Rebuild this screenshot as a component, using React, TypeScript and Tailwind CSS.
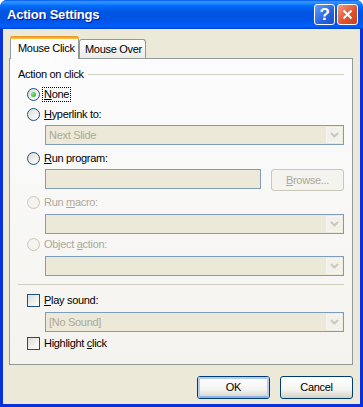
import type { ReactNode } from "react";

const font = "font-['Liberation_Sans',Arial,sans-serif]";

function Key({ children }: { children: ReactNode }) {
  return <span className="underline underline-offset-[1px]">{children}</span>;
}

function Radio({ checked, disabled }: { checked?: boolean; disabled?: boolean }) {
  return (
    <div
      className={`w-[13px] h-[13px] rounded-full border flex items-center justify-center shrink-0 ${
        disabled
          ? "border-[#CAC8BB] bg-[#F4F3EE]"
          : "border-[#1C5180] bg-[linear-gradient(135deg,#DCDCD7,#FFFFFF)]"
      }`}
    >
      {checked && (
        <div className="w-[5px] h-[5px] rounded-full bg-[radial-gradient(circle_at_35%_35%,#8CE88A,#21A121)]" />
      )}
    </div>
  );
}

function Checkbox() {
  return (
    <div className="w-[13px] h-[13px] border border-[#1C5180] bg-[linear-gradient(135deg,#DCDCD7,#FFFFFF)] shrink-0" />
  );
}

function Chevron() {
  return (
    <svg width="9" height="6" viewBox="0 0 9 6">
      <polyline points="1,1 4.5,4.5 8,1" fill="none" stroke="#C9C7BA" strokeWidth="1.8" />
    </svg>
  );
}

function Combo({ value, className = "" }: { value?: string; className?: string }) {
  return (
    <div
      className={`ml-[35px] w-[299px] h-[20px] border border-[#7F9DB9] bg-[#ECE9D8] flex items-center justify-between pl-[3px] pr-[1px] ${className}`}
    >
      <span className="text-[#ACA899]">{value}</span>
      <div className="w-[16px] h-[16px] border border-[#F6F5F1] bg-[#F1F0EA] flex items-center justify-center">
        <Chevron />
      </div>
    </div>
  );
}

function Option({
  label,
  checked,
  disabled,
  className = "",
  focus,
}: {
  label: ReactNode;
  checked?: boolean;
  disabled?: boolean;
  className?: string;
  focus?: boolean;
}) {
  return (
    <div className={`flex items-center h-[16px] pl-[17px] ${className}`}>
      <Radio checked={checked} disabled={disabled} />
      <span
        className={`ml-[3px] px-[1px] leading-[13px] ${disabled ? "text-[#ACA899]" : "text-black"} ${
          focus ? "outline-1 outline-dotted outline-black" : ""
        }`}
      >
        {label}
      </span>
    </div>
  );
}

function XpButton({ children, isDefault }: { children: ReactNode; isDefault?: boolean }) {
  return (
    <div className="w-[73px] h-[23px] rounded-[3px] border border-[#003C74] bg-[linear-gradient(to_bottom,#FFFFFF,#F4F4F0_60%,#D6D0C5)] flex items-center justify-center">
      <div
        className={`w-full h-full rounded-[2px] flex items-center justify-center ${
          isDefault ? "border-2 border-[#B4CCF2] border-b-[#8DB2E3]" : ""
        }`}
      >
        {children}
      </div>
    </div>
  );
}

export default function App() {
  return (
    <div className={`w-[363px] h-[407px] flex flex-col rounded-t-[7px] overflow-hidden bg-[#0831D9] text-[11px] tracking-[-0.3px] ${font}`}>
      {/* Title bar */}
      <div className="h-[29px] shrink-0 flex items-center pl-[7px] pr-[5px] bg-[linear-gradient(to_bottom,#0058EE_0%,#3A93FF_6%,#288EFF_10%,#127DFF_15%,#036FFC_20%,#0262EE_28%,#0057E5_38%,#0054E3_55%,#0055EB_75%,#005BF5_85%,#0061FF_90%,#0054E3_95%,#0041C5_100%)]">
        <span className="text-white font-bold text-[13px] tracking-[-0.2px] [text-shadow:1px_1px_0_#0A1883]">
          Action Settings
        </span>
        <div className="ml-auto flex gap-[2px]">
          <div className="w-[21px] h-[21px] rounded-[3px] border border-white bg-[linear-gradient(135deg,#6A9DF8,#2663E0_60%,#1B50C9)] flex items-center justify-center text-white font-bold text-[17px] leading-none">
            ?
          </div>
          <div className="w-[21px] h-[21px] rounded-[3px] border border-white bg-[linear-gradient(135deg,#F19C83,#E2552E_55%,#C8401E)] flex items-center justify-center">
            <svg width="11" height="11" viewBox="0 0 11 11">
              <path d="M1.5 1.5 L9.5 9.5 M9.5 1.5 L1.5 9.5" stroke="white" strokeWidth="2" />
            </svg>
          </div>
        </div>
      </div>

      {/* Body */}
      <div className="flex-1 mx-[3px] mb-[3px] bg-[#ECE9D8] flex flex-col pl-[6px] pr-[7px]">
        {/* Tabs */}
        <div className="flex items-end h-[29px] pl-[1px]">
          <div className="relative z-10 w-[69px] h-[23px] -mb-[1px] bg-[#FCFCFE] border-x border-[#919B9C] rounded-t-[3px] flex flex-col">
            <div className="h-[3px] -mx-[1px] rounded-t-[3px] bg-[linear-gradient(to_bottom,#E68B2C,#FFC73C)]" />
            <div className="flex-1 flex items-center pl-[7px] pb-[2px] text-black">Mouse Click</div>
          </div>
          <div className="w-[67px] h-[19px] border border-b-0 border-[#919B9C] rounded-t-[3px] bg-[linear-gradient(to_bottom,#FFFFFF,#ECEBE6)] flex items-center pl-[5px] text-black">
            Mouse Over
          </div>
        </div>

        {/* Panel */}
        <div className="h-[307px] border border-[#919B9C] bg-[linear-gradient(to_bottom,#FCFCFE,#F4F3EE)] flex flex-col pr-[8px]">
          <div className="mt-[8px] h-[14px] flex items-center pl-[8px]">
            <span className="text-black">Action on click</span>
            <div className="flex-1 h-px ml-[4px] bg-[#D0D0BF]" />
          </div>

          <Option className="mt-[5px]" checked focus label={<><Key>N</Key>one</>} />
          <Option className="mt-[4px]" label={<><Key>H</Key>yperlink to:</>} />
          <Combo className="mt-[3px]" value="Next Slide" />

          <Option className="mt-[5px]" label={<><Key>R</Key>un program:</>} />
          <div className="mt-[3px] ml-[35px] flex items-start">
            <div className="w-[216px] h-[20px] border border-[#7F9DB9] bg-[#ECE9D8]" />
            <div className="ml-[10px] w-[73px] h-[22px] rounded-[3px] border border-[#C9C7BA] bg-[#F4F3EE] flex items-center justify-center text-[#ACA899]">
              <span><Key>B</Key>rowse...</span>
            </div>
          </div>

          <Option className="mt-[3px]" disabled label={<>Run <Key>m</Key>acro:</>} />
          <Combo className="mt-[4px]" />

          <Option className="mt-[2px]" disabled label={<>Object <Key>a</Key>ction:</>} />
          <Combo className="mt-[4px]" />

          <div className="mt-[8px] ml-[8px] h-px bg-[#D0D0BF]" />

          <div className="mt-[7px] flex items-center h-[16px] pl-[17px]">
            <Checkbox />
            <span className="ml-[4px] text-black"><Key>P</Key>lay sound:</span>
          </div>
          <Combo className="mt-[4px]" value="[No Sound]" />
          <div className="mt-[3px] flex items-center h-[16px] pl-[17px]">
            <Checkbox />
            <span className="ml-[4px] text-black">Highlight <Key>c</Key>lick</span>
          </div>
        </div>

        {/* Buttons */}
        <div className="mt-[11px] flex justify-end gap-[10px]">
          <XpButton isDefault>OK</XpButton>
          <XpButton>Cancel</XpButton>
        </div>
      </div>
    </div>
  );
}
